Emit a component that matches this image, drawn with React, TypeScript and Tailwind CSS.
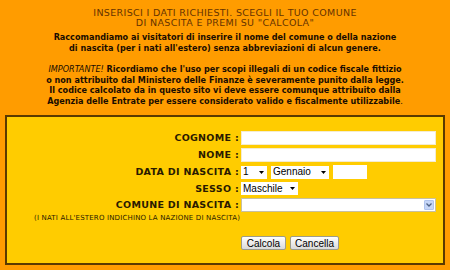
import React from "react";

const geo = { fontFamily: '"DejaVu Sans", sans-serif' };

function Sel({ w, text }: { w: number; text: string }) {
  return (
    <div
      className="flex items-center justify-between bg-white h-[13px] pl-[2px] pr-[3px] text-[10px] leading-none text-black"
      style={{ width: w, fontFamily: '"Liberation Sans", Arial, sans-serif' }}
    >
      <span>{text}</span>
      <svg width="5" height="3" viewBox="0 0 5 3">
        <path d="M0 0H5L2.5 3Z" fill="#000" />
      </svg>
    </div>
  );
}

export default function App() {
  const label = "text-right text-[9.5px] font-bold uppercase text-[#2a1a00] leading-none tracking-[0.3px]";
  return (
    <div className="w-[450px] h-[270px] overflow-hidden bg-[#ff9c00] flex flex-col items-center" style={{ fontFamily: '"DejaVu Sans", Verdana, sans-serif' }}>
      <div className="mt-[8px] text-center text-[#663300] text-[9.5px] leading-[10px] uppercase tracking-[0.35px]" style={geo}>
        <div>Inserisci i dati richiesti. Scegli il tuo comune</div>
        <div>di nascita e premi su "calcola"</div>
      </div>
      <div className="mt-[4px] text-center text-[#1a0d00] text-[9px] leading-[11px] font-bold" style={{ fontFamily: '"DejaVu Sans Condensed", "DejaVu Sans", sans-serif' }}>
        <div>Raccomandiamo ai visitatori di inserire il nome del comune o della nazione</div>
        <div>di nascita (per i nati all'estero) senza abbreviazioni di alcun genere.</div>
      </div>
      <div className="mt-[10px] text-center text-[#1a0d00] text-[9px] leading-[10.5px] font-bold" style={{ fontFamily: '"DejaVu Sans Condensed", "DejaVu Sans", sans-serif' }}>
        <div>
          <span className="italic font-normal">IMPORTANTE!</span> Ricordiamo che l'uso per scopi illegali di un codice fiscale fittizio
        </div>
        <div>o non attribuito dal Ministero delle Finanze è severamente punito dalla legge.</div>
        <div>Il codice calcolato da in questo sito vi deve essere comunque attribuito dalla</div>
        <div>
          Agenzia delle Entrate per essere considerato valido e fiscalmente utilizzabile<span className="font-normal">.</span>
        </div>
      </div>
      <div className="mt-[9px] w-[440px] h-[150px] border-2 border-[#5a3a00] bg-[#ffcc00] pt-[14px] flex flex-col">
        <div className="grid grid-cols-[232px_1fr] gap-x-[2px] gap-y-[3px] items-center">
          <div className={label} style={geo}>Cognome :</div>
          <div className="h-[14px] w-[195px] bg-white border border-[#f4ecd0]" />
          <div className={label} style={geo}>Nome :</div>
          <div className="h-[14px] w-[195px] bg-white border border-[#f4ecd0]" />
          <div className={label} style={geo}>Data di nascita :</div>
          <div className="flex items-center gap-[4px]">
            <Sel w={26} text="1" />
            <Sel w={58} text="Gennaio" />
            <div className="h-[14px] w-[34px] bg-white" />
          </div>
          <div className={label} style={geo}>Sesso :</div>
          <Sel w={57} text="Maschile" />
          <div className={label} style={geo}>Comune di nascita :</div>
          <div className="h-[14px] w-[195px] bg-white border border-[#c8c0a0] flex items-center justify-end pr-[1px]">
            <div className="w-[10px] h-[10px] rounded-[1px] bg-[#c6d6f7] border border-[#b0c4ee] flex items-center justify-center">
              <svg width="6" height="4" viewBox="0 0 6 4">
                <path d="M0.5 0.5L3 3L5.5 0.5" stroke="#4d6185" strokeWidth="1.3" fill="none" />
              </svg>
            </div>
          </div>
        </div>
        <div className="mt-[3px] pl-[27px] text-[7px] leading-none uppercase text-[#2a1a00] tracking-[0.17px]" style={{ fontFamily: '"DejaVu Sans", Verdana, sans-serif' }}>
          (I nati all'estero indichino la nazione di nascita)
        </div>
        <div className="mt-[14px] pl-[234px] flex gap-[4px]" style={{ fontFamily: '"Liberation Sans", Arial, sans-serif' }}>
          <div className="h-[14px] w-[45px] flex items-center justify-center text-[10px] text-black bg-gradient-to-b from-white to-[#dadada] border border-[#9c9c8c] rounded-[2px]">Calcola</div>
          <div className="h-[14px] w-[49px] flex items-center justify-center text-[10px] text-black bg-gradient-to-b from-white to-[#dadada] border border-[#9c9c8c] rounded-[2px]">Cancella</div>
        </div>
      </div>
    </div>
  );
}
